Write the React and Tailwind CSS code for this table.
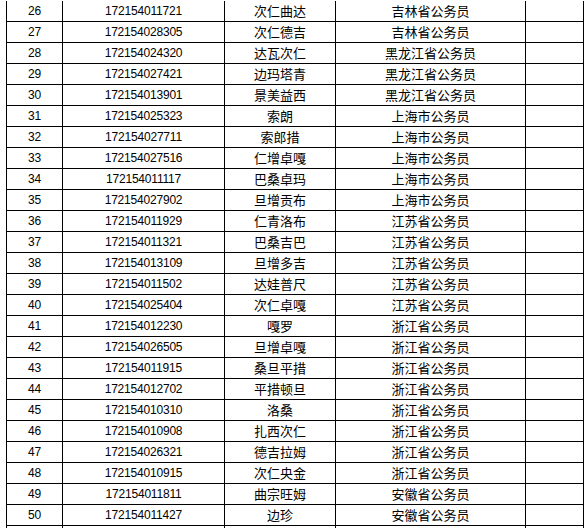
const rows = [
  ["26", "172154011721", "次仁曲达", "吉林省公务员"],
  ["27", "172154028305", "次仁德吉", "吉林省公务员"],
  ["28", "172154024320", "达瓦次仁", "黑龙江省公务员"],
  ["29", "172154027421", "边玛塔青", "黑龙江省公务员"],
  ["30", "172154013901", "景美益西", "黑龙江省公务员"],
  ["31", "172154025323", "索朗", "上海市公务员"],
  ["32", "172154027711", "索郎措", "上海市公务员"],
  ["33", "172154027516", "仁增卓嘎", "上海市公务员"],
  ["34", "172154011117", "巴桑卓玛", "上海市公务员"],
  ["35", "172154027902", "旦增贡布", "上海市公务员"],
  ["36", "172154011929", "仁青洛布", "江苏省公务员"],
  ["37", "172154011321", "巴桑吉巴", "江苏省公务员"],
  ["38", "172154013109", "旦增多吉", "江苏省公务员"],
  ["39", "172154011502", "达娃普尺", "江苏省公务员"],
  ["40", "172154025404", "次仁卓嘎", "江苏省公务员"],
  ["41", "172154012230", "嘎罗", "浙江省公务员"],
  ["42", "172154026505", "旦增卓嘎", "浙江省公务员"],
  ["43", "172154011915", "桑旦平措", "浙江省公务员"],
  ["44", "172154012702", "平措顿旦", "浙江省公务员"],
  ["45", "172154010310", "洛桑", "浙江省公务员"],
  ["46", "172154010908", "扎西次仁", "浙江省公务员"],
  ["47", "172154026321", "德吉拉姆", "浙江省公务员"],
  ["48", "172154010915", "次仁央金", "浙江省公务员"],
  ["49", "172154011811", "曲宗旺姆", "安徽省公务员"],
  ["50", "172154011427", "边珍", "安徽省公务员"],
  ["", "", "", ""],
];

const latin = { fontFamily: '"Liberation Sans", "Noto Sans CJK SC", sans-serif' };
const cjk = { fontFamily: '"Noto Sans CJK SC", "Liberation Sans", sans-serif' };

function Row({ r }) {
  const cell = "border-l border-black flex items-center justify-center h-full";
  return (
    <div className="grid grid-cols-[56px_162px_111px_190px_59px] h-[21px] border-b border-black text-black">
      <div className={`${cell} text-[12px] tracking-[-0.2px]`} style={latin}>{r[0]}</div>
      <div className={`${cell} text-[12px] tracking-[-0.2px]`} style={latin}>{r[1]}</div>
      <div className={`${cell} text-[13px]`} style={cjk}>{r[2]}</div>
      <div className={`${cell} text-[13px]`} style={cjk}>{r[3]}</div>
      <div className={`${cell} border-r`}></div>
    </div>
  );
}

export default function App() {
  return (
    <div className="w-[588px] h-[528px] overflow-hidden bg-white">
      <div className="ml-[6px] pt-[1px] w-[578px]">
        {rows.map((r, i) => (
          <Row key={i} r={r} />
        ))}
      </div>
    </div>
  );
}
